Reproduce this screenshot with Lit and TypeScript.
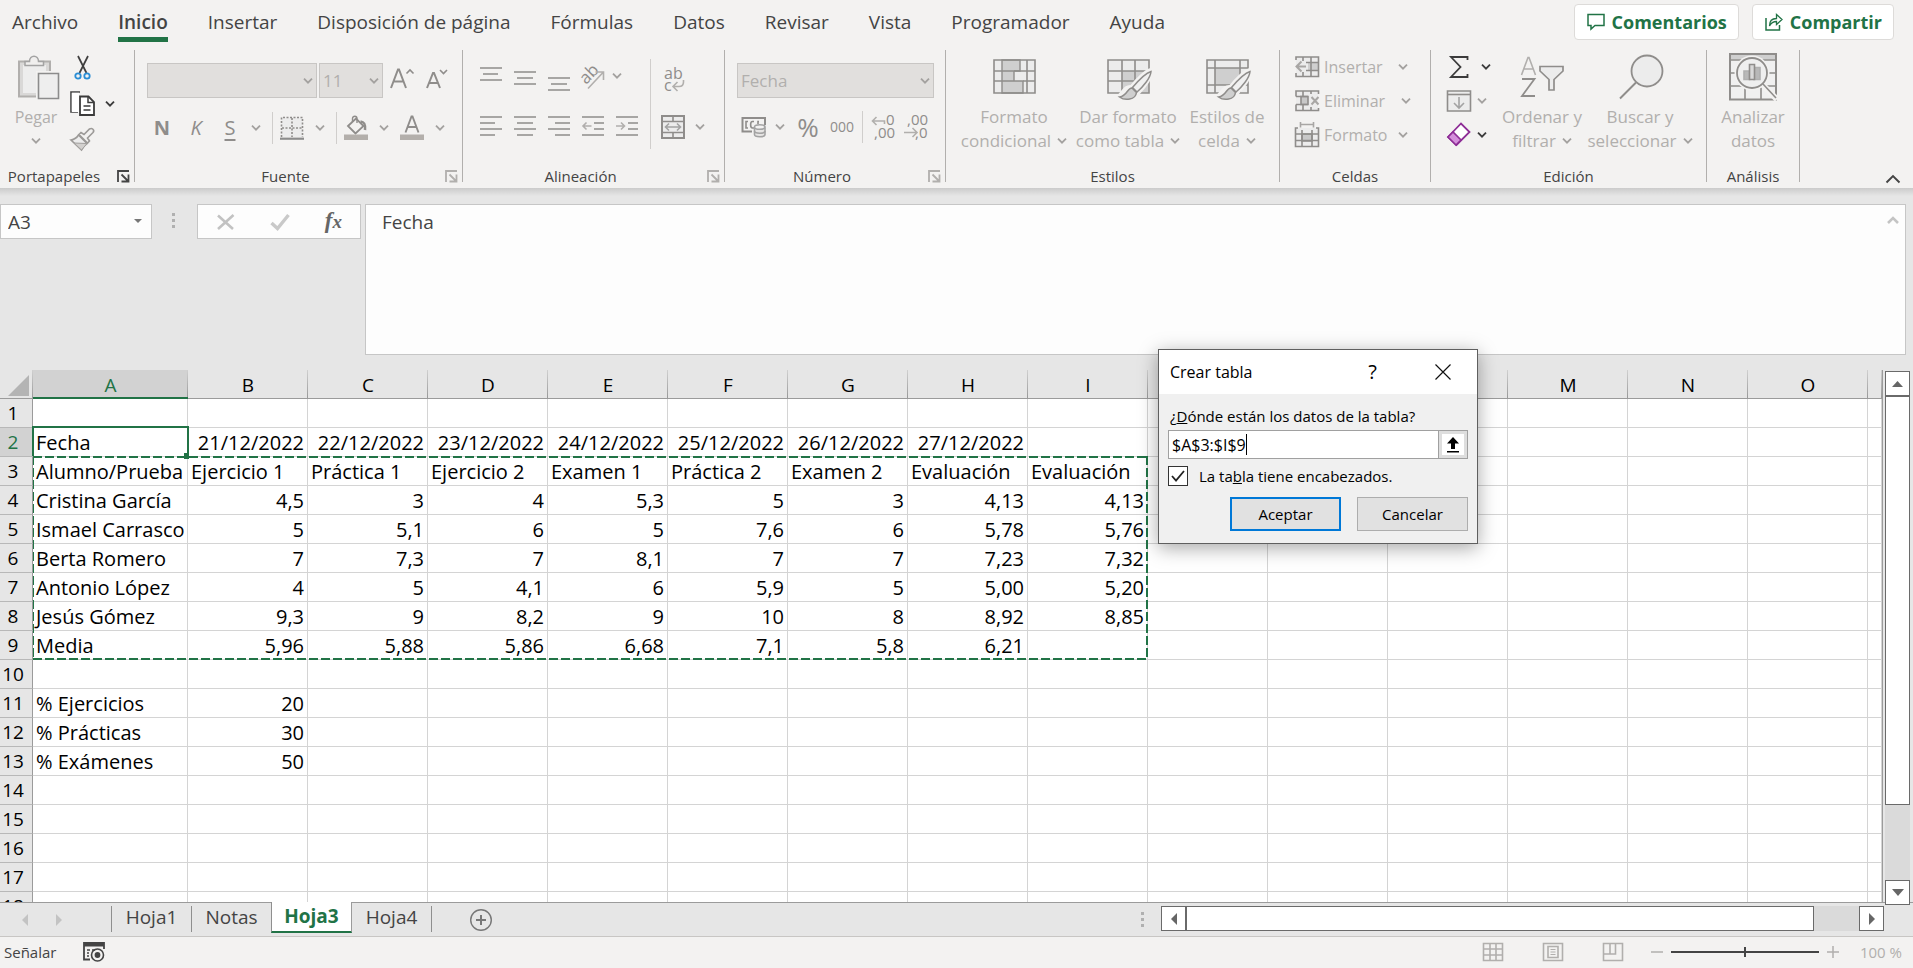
import { LitElement, html, svg, css, nothing, TemplateResult } from "lit";
import { customElement, state } from "lit/decorators.js";
import { classMap } from "lit/directives/class-map.js";

const chev = html`<svg class="chev" width="10" height="6" viewBox="0 0 10 6"><path d="M1 .7l4 4 4-4" fill="none" stroke="currentColor" stroke-width="1.8"/></svg>`;

const ico = (w: number, h: number, body: TemplateResult | TemplateResult[]) =>
  html`<svg class="ico" width=${w} height=${h} viewBox="0 0 ${w} ${h}" fill="none" stroke="currentColor" stroke-width="1.6" aria-hidden="true">${body}</svg>`;

/* Horizontal strokes given as [x1, x2, y]. */
const lines = (rows: number[][]) => svg`<path d=${rows.map(([a, b, y]) => `M${a} ${y}H${b}`).join("")} />`;

const brushOver = () =>
  svg`<path d="M47 17C42 18 33 27 27.500 34C22 33 20 38 14 44.500C24 48 33 46 34 40C40 34 47 25 47 17Z" fill="#f3f2f1" stroke="#f3f2f1" stroke-width="4"/><path d="M47 18.500C42 20 34 28 28.500 34.500L33 39C39 34 46.500 25 47 18.500Z" fill="#f0f0f0" stroke-width="1.500"/><path d="M28 35C23 35 23.500 43 15.500 44C21 48 31.500 47 32.500 39.500Z" fill="#cfcfcf" stroke-width="1.500"/>`;

const I = {
  paste: ico(48, 48, svg`<path d="M7 8.500H38V43.500H7Z" fill="#d9d8d7" stroke="#b1afad" stroke-width="2"/><path d="M11 12H34V40H11Z" fill="#ededed" stroke="none"/><path d="M13 12.500V8.500H17.500C17.500 1.500 26.500 1.500 26.500 8.500H31.500V12.500Z" fill="#f0efee" stroke="#a3a3a3" stroke-width="1.500"/><path d="M24 18H50V47H24Z" fill="#f3f2f1" stroke="none"/><path d="M26.500 20.500H46.500V45.500H26.500Z" fill="#eeeeee" stroke="#8c8c8c"/>`),
  cut: ico(18, 24, svg`<path d="M4 0L12.500 17M14 0L5.500 17" stroke="#3f3f3f" stroke-width="1.700"/><circle cx="4" cy="20" r="2.700" stroke="#2a8dd4" stroke-width="1.800"/><circle cx="13" cy="20" r="2.700" stroke="#2a8dd4" stroke-width="1.800"/>`),
  copy: ico(26, 26, svg`<path d="M8 21H1V1H10" stroke="#444"/><path d="M1.800 1.800H9V21H1.800Z" fill="#fff" stroke="none"/><path d="M10 5.500H18.500L24 11V24H10Z" fill="#fff" stroke="#3b3b3b" stroke-width="1.800"/><path d="M18 5.500V11.500H24M13.500 15H20.500M13.500 19H20.500" stroke="#3b3b3b" stroke-width="1.500"/>`),
  brush: ico(26, 24, svg`<path d="M1 12C4 11.500 7 9.500 8.500 7L17 15.500C14.500 17 13 19.500 11.500 22Z" fill="#ececec" stroke="#9c9a98"/><path d="M4 15L17 15.500L11.500 22Z" fill="#d2d0ce" stroke="#a19f9d" stroke-width="1"/><path d="M9 6.500L11 4.500L14 6.500L19.500 1C22 -.5 25 2 23 4.500L17.500 10L19.500 13L17.500 15Z" fill="#f3f2f1" stroke="#9c9a98"/>`),
  grow: ico(24, 24, svg`<path d="M1 19L8 .5H9L16 19M3.500 12.500H13.500" stroke-width="2"/><path d="M16.500 4.500L20 1L23.500 4.500" stroke-width="1.600"/>`),
  shrink: ico(24, 24, svg`<path d="M2 19L8 4H9L15 19M4 14H13" stroke-width="2"/><path d="M15 1L18.500 4.500L22 1" stroke-width="1.600"/>`),
  borders: ico(24, 24, svg`<path d="M1.500 21V1.500H22.500V21" fill="#ececec" stroke-dasharray="2 1.500"/><path d="M12 2V21M2 12H22" stroke-dasharray="2 1.500"/><path d="M0 22.700H24" stroke-width="2.200" stroke="#8c8c8c"/>`),
  fill: ico(26, 26, svg`<path d="M5 11L13 3.500L20.500 11L12.500 18.500Z" fill="#f3f2f1" stroke-width="1.800"/><path d="M9.500 7V3.500C9.500 .5 14 .5 14 3.500V8" stroke-width="1.400"/><path d="M17.500 6.500C22 7 22.500 10 22 15" stroke-width="2.600"/><path d="M1 19.500H25V25H1Z" fill="#b3afab" stroke="none"/>`),
  color: ico(26, 26, svg`<path d="M6.500 17.500L12.500 1.500H13.500L19.500 17.500M8.500 12H17.500" stroke-width="1.900"/><path d="M1 19.500H25V25H1Z" fill="#b3afab" stroke="none"/>`),
  top: ico(24, 26, lines([[1, 23, 5], [4, 19, 11], [1, 23, 17]])),
  mid: ico(24, 26, lines([[1, 23, 9], [4, 20, 15], [1, 23, 21]])),
  bot: ico(24, 26, lines([[1, 23, 15], [4, 20, 21], [1, 23, 27]])),
  left: ico(24, 24, lines([[1, 23, 2], [1, 16, 8], [1, 23, 14], [1, 16, 20]])),
  center: ico(24, 24, lines([[1, 23, 2], [4, 20, 8], [1, 23, 14], [4, 20, 20]])),
  right: ico(24, 24, lines([[1, 23, 2], [8, 23, 8], [1, 23, 14], [8, 23, 20]])),
  outdent: ico(24, 24, svg`${lines([[1, 23, 2], [13, 23, 8], [13, 23, 14], [1, 23, 20]])}<path d="M10.500 11H2M5.500 7.500L2 11L5.500 14.500" stroke="#b1afad"/>`),
  indent: ico(24, 24, svg`${lines([[1, 23, 2], [13, 23, 8], [13, 23, 14], [1, 23, 20]])}<path d="M1 11H9.500M6 7.500L9.500 11L6 14.500" stroke="#b1afad"/>`),
  orient: ico(28, 28, svg`<g transform="rotate(-45 9 11)"><text x="-1" y="18" font-size="17" fill="#8f8d8b" stroke="none">ab</text></g><path d="M9 26.500L24 10.500M16.500 10H24.500V18" stroke="#b1afad"/>`),
  wrap: ico(24, 28, svg`<text x="1" y="17" font-size="16" fill="#8f8d8b" stroke="none">ab</text><text x="1" y="29" font-size="16" fill="#8f8d8b" stroke="none">c</text><path d="M20.500 18V20C20.500 23 19 24.500 16 24.500H10.500M14.500 20L10 24.500L14.500 29" stroke="#b1afad"/>`),
  merge: ico(24, 24, svg`<path d="M1 1H23V23H1Z" fill="#ececec" stroke-width="2"/><path d="M1 6.500H23M1 17.500H23M12 1V6M12 18V23"/><path d="M5 12H19M8 8.500L4.500 12L8 15.500M16 8.500L19.500 12L16 15.500" stroke="#a3a3a3"/>`),
  money: ico(26, 22, svg`<path d="M11 15.500H1.500V2H24V9" stroke-width="2"/><path d="M7 5.500H5V12H7M13 12H11.500C9 12 9 5.500 11.500 5.500H13M18 5.500H17V8" stroke-width="1.600"/><path d="M13.500 11.500V18.500C13.500 21.500 24 21.500 24 18.500V11.500" fill="#e6e5e4" stroke="#a3a3a3"/><ellipse cx="18.750" cy="11" rx="5.250" ry="2.300" fill="#f3f2f1" stroke="#a3a3a3"/><path d="M13.500 15C13.500 18 24 18 24 15" stroke="#a3a3a3"/>`),
  moreDec: ico(24, 26, svg`<text x="15" y="11" font-size="15" fill="#8f8d8b" stroke="none">0</text><text x="3" y="24" font-size="15" fill="#8f8d8b" stroke="none">,00</text><path d="M13.500 10V7H1.500M5.500 3L1.500 7L5.500 11" stroke="#b1afad"/>`),
  lessDec: ico(24, 26, svg`<text x="3" y="11" font-size="15" fill="#8f8d8b" stroke="none">,00</text><text x="11" y="24" font-size="15" fill="#8f8d8b" stroke="none">,0</text><path d="M0 18.500H12.500M8.500 14L13 18.500L8.500 23" stroke="#b1afad"/>`),
  condfmt: ico(48, 48, svg`<path d="M4 7H45V40H4Z" fill="#ececec" stroke="none"/><path d="M12 7H30V18H12ZM12 18H24V28H12ZM12 28H33V40H12Z" fill="#cfcfcf" stroke-width="1.400"/><path d="M4 7H45V40H4Z M4 18H12M30 18H45M4 28H12M33 28H45M37 7V40M24 18H30" stroke-width="1.600"/>`),
  tablefmt: ico(48, 48, svg`<path d="M4 7H45V40H4Z" fill="#ececec" stroke="none"/><path d="M18 18H45V40H18Z" fill="#cfcfcf" stroke="none"/><path d="M4 7H45V40H4ZM4 18H45M4 28H45M18 7V40M31 7V40"/>${brushOver()}`),
  cellstyle: ico(48, 48, svg`<path d="M4 7H45V40H4Z" fill="#ececec" stroke="none"/><path d="M12 15H37V32H12Z" fill="#cfcfcf" stroke="none"/><path d="M4 7H45V40H4ZM4 15H45M4 32H45M12 7V40M37 7V40"/>${brushOver()}`),
  insert: ico(26, 24, svg`<path d="M2 2H24V21H2Z" fill="#ececec" stroke="none"/><path d="M14 7.500H24V15.500H14Z" fill="#cfcfcf" stroke="none"/><path d="M2 5V2H24.500V21.500H2V18M9 2V6M17 2V21M9 17V21M12 7.500H24M12 15.500H24"/><path d="M12 11.500H2.500M7.500 6.500L2.500 11.500L7.500 16.500" stroke="#a8a6a4" stroke-width="2"/>`),
  del: ico(26, 24, svg`<path d="M2 2H24V21H2Z" fill="#ececec" stroke="none"/><path d="M7 7.500H14V15.500H7Z" fill="#c8c8c8"/><path d="M2 7.500V2H24.500V5M2 15.500V21.500H24.500V19M9 2V7M17 2V5M9 16V21M17 18V21M2 7.500H14M2 15.500H14"/><path d="M17.500 8L24.500 15.500M24.500 8L17.500 15.500" stroke="#a8a6a4" stroke-width="2"/>`),
  format: ico(26, 26, svg`<path d="M2 6H24V24H2Z" fill="#ececec" stroke="none"/><path d="M8 12H18V19H8Z" fill="#c8c8c8"/><path d="M4 6H1.500V24.500H24.500V6H22M1.500 12H24.500M1.500 18.500H24.500M8 8V24M18 8V24"/><path d="M6.500 2.500H19.500M6.500 0V5.500M19.500 0V5.500" stroke="#a8a6a4"/>`),
  sum: ico(20, 24, svg`<path d="M18.500 5V2H2L11.500 12L2 22H18.500V19" stroke="#3b3b3b" stroke-width="1.800"/>`),
  filldown: ico(26, 24, svg`<path d="M1.500 2H24.500V22H1.500Z" fill="#ececec"/><path d="M1.500 5.500H24.500" /><path d="M13 8V18.500M8 14L13 19L18 14" stroke="#a3a3a3"/>`),
  erase: ico(26, 26, svg`<path d="M2 15L15 1.500L23.500 10L10.500 23Z" fill="#fff" stroke="#8e2d96" stroke-width="1.800"/><path d="M2 15L7 10L15 18L10 23Z" fill="#d48fdb" stroke="#8e2d96" stroke-width="1.600"/>`),
  sort: ico(48, 48, svg`<path d="M3.500 22L10 4.500H11L17.500 22M6 16H15" stroke="#b1afad"/><path d="M4 26H16.500L4 43H17" stroke-width="1.800"/><path d="M22 13.500H45V18L36 26.500V37H31V26.500L22 18Z" fill="#ececec" stroke-width="1.700"/>`),
  find: ico(48, 48, svg`<circle cx="31" cy="18" r="15.500" fill="#ececec" stroke-width="1.800"/><path d="M20 29.500L4 45.500" stroke-width="1.900"/>`),
  analyze: ico(50, 48, svg`<path d="M2 1H48V46.500H2Z" fill="#f0f0f0" stroke-width="2"/><path d="M3 2H47V6.500H3Z" fill="#cfcfcf" stroke="none"/><path d="M2 7H48M2 20H48M2 33H48M17 33V46M33 33V46"/><path d="M35 32L49 46.500" stroke="#f3f2f1" stroke-width="6"/><circle cx="24" cy="20" r="17.500" fill="#f3f2f1" stroke="none"/><circle cx="24" cy="20" r="15" fill="#efefef" stroke-width="1.800"/><path d="M35 31L48 45"/><path d="M16 18H21.500V26.500H16ZM26 14.500H32V26.500H26Z" fill="#b8b8b8" stroke="#b0b0b0"/><path d="M21.500 11.500H26.500V26.500H21.500Z" fill="#d9d9d9"/>`),
  launch: ico(13, 13, svg`<path d="M1 12V1H12" stroke-width="1.800"/><path d="M4.500 4.500L11 11M11.500 4.500V11.500H4.500" stroke-width="1.800"/>`),
  comment: ico(18, 18, svg`<path d="M1 1.500H17V12.500H8L4 16V12.500H1Z" stroke-width="1.500"/>`),
  share: ico(18, 20, svg`<path d="M1 6V18H14.500V13" stroke-width="1.500"/><path d="M4.500 14C4.500 9 7 6.500 11.500 6.500V2.500L17 7.500L11.500 12.500V9.500C8 9.500 6 11 4.500 14Z" stroke-width="1.300"/>`),
  up: ico(16, 10, svg`<path d="M1.500 8.500L8 2L14.500 8.500" stroke-width="1.900"/>`),
  cancel: ico(20, 18, svg`<path d="M2 2.500L17 16M17.500 2L2 16" stroke="#c2c2c2" stroke-width="2.600"/>`),
  accept: ico(20, 18, svg`<path d="M1.500 10L7.500 15.500L18.500 2" stroke="#c9c9c9" stroke-width="3.400"/>`),
  macro: ico(24, 22, svg`<path d="M8 18.500H2V2H22V8" stroke-width="1.800"/><path d="M2 4H22" stroke-width="3"/><path d="M5 9H8M5 12H7M5 15H7M10 9H13"/><circle cx="15.500" cy="14" r="6" stroke-width="1.600"/><circle cx="15.500" cy="14" r="2.900" fill="currentColor" stroke="none"/>`),
  vgrid: ico(22, 20, svg`<path d="M1.500 1.500H20.500V18.500H1.500ZM1.500 7H20.500M1.500 13H20.500M8 1.500V18.500M14 1.500V18.500"/>`),
  vpage: ico(22, 20, svg`<path d="M1.500 1.500H20.500V18.500H1.500ZM6 4.500H16V15.500H6Z"/><path d="M8.500 7.500H13.500M8.500 10H13.500M8.500 12.500H13.500" stroke-width="1.200"/>`),
  vbreak: ico(22, 20, svg`<path d="M1.500 1.500H20.500V18.500H1.500ZM1.500 12H13.500V1.500M8 1.500V12"/>`),
};

const TABS = ["Archivo", "Inicio", "Insertar", "Disposición de página", "Fórmulas", "Datos", "Revisar", "Vista", "Programador", "Ayuda"];
const COLS = "ABCDEFGHIJKLMNO".split("");
const DATA: Record<number, string[]> = {
  2: ["Fecha", "21/12/2022", "22/12/2022", "23/12/2022", "24/12/2022", "25/12/2022", "26/12/2022", "27/12/2022"],
  3: ["Alumno/Prueba", "Ejercicio 1", "Práctica 1", "Ejercicio 2", "Examen 1", "Práctica 2", "Examen 2", "Evaluación", "Evaluación"],
  4: ["Cristina García", "4,5", "3", "4", "5,3", "5", "3", "4,13", "4,13"],
  5: ["Ismael Carrasco", "5", "5,1", "6", "5", "7,6", "6", "5,78", "5,76"],
  6: ["Berta Romero", "7", "7,3", "7", "8,1", "7", "7", "7,23", "7,32"],
  7: ["Antonio López", "4", "5", "4,1", "6", "5,9", "5", "5,00", "5,20"],
  8: ["Jesús Gómez", "9,3", "9", "8,2", "9", "10", "8", "8,92", "8,85"],
  9: ["Media", "5,96", "5,88", "5,86", "6,68", "7,1", "5,8", "6,21"],
  11: ["% Ejercicios", "20"],
  12: ["% Prácticas", "30"],
  13: ["% Exámenes", "50"],
};

@customElement("excel-ribbon")
class ExcelRibbon extends LitElement {
  static styles = css`
    :host { display: block; background: #f3f2f1; color: #444; }
    * { box-sizing: border-box; }
    button, select { font: inherit; color: inherit; background: none; border: 0; padding: 0; margin: 0; }
    svg { display: block; flex: none; overflow: visible; }
    text { font-family: "Open Sans", sans-serif; }
    .top { display: flex; align-items: flex-start; height: 50px; padding: 0 19px 0 12px; }
    .tabs { display: flex; gap: 40px; font-size: 19px; line-height: 26px; padding-top: 10px; flex: 1; white-space: nowrap; }
    .tab { border-bottom: 5px solid transparent; height: 32px; line-height: 24px; padding-bottom: 3px; }
    .tab.on { border-color: #217346; font-weight: 600; }
    .acts { display: flex; gap: 13px; padding-top: 4px; }
    .act { display: flex; align-items: center; gap: 7px; height: 36px; padding: 0 11px 0 12px; background: #fff; border: 1px solid #dddbd9; border-radius: 4px; color: #217346; font-size: 18px; font-weight: 700; }
    .body { display: flex; height: 138px; padding-right: 12px; }
    .group { display: flex; flex-direction: column; flex: none; height: 138px; }
    .gsep { width: 1px; height: 132px; background: #b1afad; flex: none; }
    .area { display: flex; height: 116px; color: #8f8d8b; }
    .label { display: flex; align-items: center; height: 20px; font-size: 15px; line-height: 20px; }
    .label span { flex: 1; text-align: center; }
    .launch { width: 26px; padding-left: 9px; color: #b1afad; }
    .launch.live { color: #444; }
    .chev { color: #a3a19f; }
    .live .chev { color: #3b3b3b; }
    .clip { width: 134px; } .font { width: 327px; } .align { width: 261px; } .num { width: 220px; }
    .styles { width: 333px; } .cells { width: 150px; } .edit { width: 275px; } .anal { width: 92px; }
    .big { display: flex; flex-direction: column; align-items: center; font-size: 17px; line-height: 24px; color: #b1afad; padding-top: 3px; white-space: nowrap; }
    .big .ico { color: #8f8d8b; margin-bottom: 4px; }
    .big .ln { display: flex; align-items: center; gap: 6px; min-height: 24px; }
    .paste { margin-left: 13px; font-size: 16px; width: 46px; }
    .col { display: grid; grid-auto-rows: 34px; align-items: center; justify-items: start; }
    .clip .col { margin-left: 9px; grid-auto-rows: 36px; }
    .row { display: flex; align-items: center; }
    .rows { display: flex; flex-direction: column; flex: none; }
    .btn { display: flex; align-items: center; justify-content: center; height: 34px; flex: none; }
    .w14 { width: 14px; } .w18 { width: 18px; } .w24 { width: 24px; } .w26 { width: 26px; } .w30 { width: 30px; } .w34 { width: 34px; } .w38 { width: 38px; } .w40 { width: 40px; }
    .sep { width: 1px; height: 32px; background: #d0cecc; flex: none; }
    .sel { position: relative; display: block; height: 35px; }
    .sel select { appearance: none; width: 100%; height: 35px; border: 1px solid #c8c6c4; background: #e1dfdd; color: #b1afad; font-size: 17px; padding: 0 3px; opacity: 1; }
    .sel svg { position: absolute; right: 4px; top: 15px; }
    .row1 { padding: 13px 0 0 12px; }
    .row1 .sel { width: 170px; margin-right: 2px; }
    .row1 .sel.size { width: 64px; margin-right: 4px; }
    .row1 .shrink { margin-left: 5px; }
    .row2 { padding: 13px 0 0 10px; }
    .row2 .sep { margin-left: 7px; }
    .glyph { font-size: 20px; line-height: 24px; }
    .n { font-weight: 700; } .k { font-style: italic; } .s { text-decoration: underline; text-underline-offset: 4px; }
    .align .rows { padding: 9px 0 0 11px; width: 187px; gap: 17px; }
    .align .sep { height: 90px; margin-top: 9px; }
    .align .rows.side { padding-left: 7px; width: auto; align-items: flex-start; }
    .num .sel { width: 197px; margin: 13px 0 12px 12px; }
    .num .row { padding-left: 12px; }
    .num .sep { margin-left: 5px; }
    .pct { font-size: 26px; line-height: 26px; } .mil { font-size: 14px; line-height: 20px; }
    .styles .area { padding-left: 15px; gap: 8px; }
    .styles .big { width: 106px; } .styles .big.narrow { width: 76px; }
    .cells .area { padding-left: 14px; font-size: 16px; }
    .item { display: grid; grid-template-columns: 26px 70px auto; column-gap: 4px; align-items: center; justify-items: start; color: #b1afad; }
    .item .ico { color: #8f8d8b; }
    .item .wide { padding-left: 3px; }
    .edit .area { padding-left: 14px; }
    .edit .col { width: 54px; }
    .tool { display: grid; grid-template-columns: 28px auto; column-gap: 4px; align-items: center; justify-items: center; }
    .tool.sum { column-gap: 8px; }
    .edit .b1 { width: 86px; } .edit .b2 { width: 104px; margin-left: 3px; }
    .anal .big { width: 92px; }
    .collapse { margin-left: auto; align-self: flex-end; padding-bottom: 4px; }
    .shade { height: 8px; background: linear-gradient(#cbcbcb, #e6e6e6); }
  `;

  private btn(label: string, cls: string, icon: unknown) {
    return html`<button class="btn ${cls}" aria-label=${label}>${icon}</button>`;
  }

  private group(cls: string, title: string, area: unknown, launch = 0) {
    return html`<section class="group ${cls}"><div class="area">${area}</div>
      <div class="label"><span>${title}</span>${launch ? html`<button class="launch ${launch > 1 ? "live" : ""}" aria-label="Más opciones de ${title}">${I.launch}</button>` : nothing}</div></section><i class="gsep"></i>`;
  }

  private big(cls: string, icon: unknown, l1: string, l2: string, drop = true) {
    return html`<button class="big ${cls}">${icon}<span>${l1}</span><span class="ln">${l2}${drop ? chev : nothing}</span></button>`;
  }

  render() {
    return html`
      <div class="top">
        <nav class="tabs">${TABS.map((t) => html`<button class="tab ${classMap({ on: t === "Inicio" })}">${t}</button>`)}</nav>
        <div class="acts"><button class="act">${I.comment}Comentarios</button><button class="act">${I.share}Compartir</button></div>
      </div>
      <div class="body">
        ${this.group("clip", "Portapapeles", html`
          <button class="big paste">${I.paste}<span>Pegar</span><span class="ln">${chev}</span></button>
          <div class="col">
            ${this.btn("Cortar", "w30", I.cut)}
            <div class="row live">${this.btn("Copiar", "w30", I.copy)}${this.btn("Opciones de copia", "w24", chev)}</div>
            ${this.btn("Copiar formato", "w30", I.brush)}
          </div>`, 2)}
        ${this.group("font", "Fuente", html`
          <div class="rows">
            <div class="row row1">
              <label class="sel"><select aria-label="Fuente" disabled><option></option></select>${chev}</label>
              <label class="sel size"><select aria-label="Tamaño" disabled><option>11</option></select>${chev}</label>
              ${this.btn("Aumentar", "w30", I.grow)}
              ${this.btn("Reducir", "w30 shrink", I.shrink)}
            </div>
            <div class="row row2">
              ${this.btn("Negrita", "w34", html`<span class="glyph n">N</span>`)}
              ${this.btn("Cursiva", "w34", html`<span class="glyph k">K</span>`)}
              ${this.btn("Subrayado", "w34", html`<span class="glyph s">S</span>`)}
              ${this.btn("Opciones de subrayado", "w18", chev)}
              <i class="sep"></i>
              ${this.btn("Bordes", "w38", I.borders)}${this.btn("Opciones de bordes", "w18", chev)}
              <i class="sep"></i>
              ${this.btn("Relleno", "w38", I.fill)}${this.btn("Opciones de relleno", "w18", chev)}
              ${this.btn("Color de fuente", "w38", I.color)}${this.btn("Opciones de color", "w18", chev)}
            </div>
          </div>`, 1)}
        ${this.group("align", "Alineación", html`
          <div class="rows">
            <div class="row">${this.btn("Superior", "w34", I.top)}${this.btn("Medio", "w34", I.mid)}${this.btn("Inferior", "w34", I.bot)}${this.btn("Orientación", "w34", I.orient)}${this.btn("Opciones de orientación", "w14", chev)}</div>
            <div class="row">${this.btn("Izquierda", "w34", I.left)}${this.btn("Centro", "w34", I.center)}${this.btn("Derecha", "w34", I.right)}${this.btn("Disminuir sangría", "w34", I.outdent)}${this.btn("Aumentar sangría", "w34", I.indent)}</div>
          </div><i class="sep"></i>
          <div class="rows side">
            ${this.btn("Ajustar texto", "w34", I.wrap)}
            <div class="row">${this.btn("Combinar", "w30", I.merge)}${this.btn("Opciones de combinar", "w24", chev)}</div>
          </div>`, 1)}
        ${this.group("num", "Número", html`
          <div class="rows">
            <label class="sel"><select aria-label="Formato de número" disabled><option>Fecha</option></select>${chev}</label>
            <div class="row">
              ${this.btn("Moneda", "w34", I.money)}${this.btn("Opciones de moneda", "w18", chev)}
              ${this.btn("Porcentaje", "w38", html`<span class="pct">%</span>`)}${this.btn("Millares", "w30", html`<span class="mil">000</span>`)}
              <i class="sep"></i>
              ${this.btn("Aumentar decimales", "w40", I.moreDec)}${this.btn("Disminuir decimales", "w26", I.lessDec)}
            </div>
          </div>`, 1)}
        ${this.group("styles", "Estilos", html`
          ${this.big("", I.condfmt, "Formato", "condicional")}
          ${this.big("", I.tablefmt, "Dar formato", "como tabla")}
          ${this.big("narrow", I.cellstyle, "Estilos de", "celda")}`)}
        ${this.group("cells", "Celdas", html`
          <div class="col">
            <button class="item">${I.insert}<span>Insertar</span>${chev}</button>
            <button class="item">${I.del}<span>Eliminar</span><span class="wide">${chev}</span></button>
            <button class="item">${I.format}<span>Formato</span>${chev}</button>
          </div>`)}
        ${this.group("edit", "Edición", html`
          <div class="col">
            <button class="tool sum live" aria-label="Autosuma">${I.sum}${chev}</button>
            <button class="tool" aria-label="Rellenar">${I.filldown}${chev}</button>
            <button class="tool live" aria-label="Borrar">${I.erase}${chev}</button>
          </div>
          ${this.big("b1", I.sort, "Ordenar y", "filtrar")}
          ${this.big("b2", I.find, "Buscar y", "seleccionar")}`)}
        ${this.group("anal", "Análisis", this.big("", I.analyze, "Analizar", "datos", false))}
        <button class="collapse" aria-label="Contraer la cinta">${I.up}</button>
      </div>
      <div class="shade"></div>`;
  }
}

@customElement("formula-bar")
class FormulaBar extends LitElement {
  static styles = css`
    :host { display: flex; align-items: flex-start; padding: 8px 7px 15px 0; background: #e6e6e6; color: #444; font-size: 19px; }
    * { box-sizing: border-box; }
    svg { display: block; overflow: visible; }
    button { border: 0; background: none; padding: 0; font: inherit; }
    .name { position: relative; width: 152px; }
    .name input { width: 100%; height: 35px; border: 1px solid #c6c6c6; background: #fdfdfd; font: inherit; color: inherit; padding: 0 7px; }
    .name svg { position: absolute; right: 10px; top: 15px; }
    .dots { display: grid; gap: 3px; width: 45px; padding: 9px 0 0 20px; }
    .dots i { width: 3px; height: 3px; background: #b0b0b0; }
    .fx { display: flex; align-items: center; justify-content: space-between; width: 164px; height: 35px; padding: 0 18px; border: 1px solid #c6c6c6; background: #fdfdfd; margin-right: 4px; }
    .fx .fn { font: italic 700 23px/30px "Liberation Serif", serif; color: #666; }
    .fn small { font-size: 19px; }
    .text { position: relative; flex: 1; height: 151px; }
    textarea { display: block; width: 100%; height: 100%; resize: none; border: 1px solid #c6c6c6; background: #fdfdfd; font: inherit; line-height: 26px; color: inherit; padding: 4px 16px; outline: 0; }
    .text svg { position: absolute; right: 7px; top: 12px; }
  `;
  render() {
    return html`
      <label class="name"><input aria-label="Cuadro de nombres" .value=${"A3"} /><svg width="8" height="4"><path d="M0 0H8L4 4Z" fill="#777" /></svg></label>
      <div class="dots"><i></i><i></i><i></i></div>
      <div class="fx"><button aria-label="Cancelar">${I.cancel}</button><button aria-label="Introducir">${I.accept}</button><button class="fn" aria-label="Insertar función">f<small>x</small></button></div>
      <label class="text"><textarea aria-label="Barra de fórmulas" .value=${"Fecha"}></textarea><svg width="12" height="8"><path d="M1 7L6 2L11 7" fill="none" stroke="#c4c4c4" stroke-width="2.600" /></svg></label>`;
  }
}

@customElement("sheet-grid")
class SheetGrid extends LitElement {
  static styles = css`
    :host { display: flex; flex: 1; min-height: 0; background: #e6e6e6; }
    * { box-sizing: border-box; }
    .view { position: relative; flex: 1; min-width: 0; overflow: hidden; border-right: 1px solid #9b9b9b; background: #fff; }
    table { border-collapse: separate; border-spacing: 0; table-layout: fixed; width: 100%; font-size: 20px; line-height: 26px; color: #000; }
    th { font-weight: 400; padding: 0; background: #e6e6e6; }
    .h0 { width: 33px; } .cA { width: 155px; } .c { width: 120px; }
    thead th { height: 29px; padding-top: 2px; font-size: 19px; line-height: 24px; border-bottom: 1px solid #9b9b9b; background: linear-gradient(#d0d0d0, #999) right / 1px 100% no-repeat #e6e6e6; }
    thead .on { background-color: #d2d2d2; color: #217346; border-bottom: 2px solid #217346; }
    .corner svg { display: block; margin: 0 0 0 8px; }
    tbody th { height: 29px; padding-right: 6px; font-size: 19px; border-right: 1px solid #9b9b9b; border-bottom: 1px solid #b8b8b8; }
    tbody .on { background: #d2d2d2; color: #217346; }
    td { height: 29px; padding: 1px 3px 0; border-right: 1px solid #d4d4d4; border-bottom: 1px solid #d4d4d4; white-space: nowrap; }
    .r { text-align: right; }
    .rel { position: relative; }
    .pick { position: absolute; left: -1px; top: -2px; width: 157px; height: 30px; border: 2px solid #217346; border-bottom: 0; }
    .knob { position: absolute; right: -2px; bottom: -3px; width: 5px; height: 6px; background: #217346; z-index: 2; }
    .ants { position: absolute; left: 0; top: -1px; width: 1116px; height: 205px; z-index: 1; overflow: visible; }
    .vbar { display: flex; flex-direction: column; width: 25px; margin: 1px 3px -3px 2px; background: #dadada; z-index: 1; }
    .vbar button { height: 25px; border: 1px solid #6a6a6a; background: #fff; padding: 0; display: grid; place-items: center; flex: none; }
    .thumb { flex: 0 1 409px; border: 1px solid #6a6a6a; background: #fff; margin-bottom: auto; }
  `;
  render() {
    const rows = Array.from({ length: 18 }, (_, i) => i + 1);
    return html`
      <div class="view">
        <table>
          <thead><tr><th class="h0 corner"><svg width="21" height="21"><path d="M21 0V21H0Z" fill="#b4b4b4" /></svg></th>
            ${COLS.map((c) => html`<th class=${c === "A" ? "cA on" : "c"}>${c}</th>`)}<th></th></tr></thead>
          <tbody>${rows.map((r) => html`<tr><th class=${r === 2 ? "on" : ""}>${r}</th>${[...COLS, "P"].map((_, i) => this.cell(r, i))}</tr>`)}</tbody>
        </table>
      </div>
      <div class="vbar">
        <button aria-label="Subir"><svg width="11" height="6"><path d="M5.500 0L11 6H0Z" fill="#666" /></svg></button>
        <div class="thumb"></div>
        <button aria-label="Bajar"><svg width="12" height="7"><path d="M0 0H12L6 7Z" fill="#666" /></svg></button>
      </div>`;
  }
  private cell(r: number, i: number) {
    const v = DATA[r]?.[i] ?? "";
    const right = i > 0 && r !== 3;
    const over =
      i === 0 && r === 2 ? html`<i class="pick"></i><i class="knob"></i>`
      : i === 0 && r === 3 ? html`<svg class="ants"><path d="M0 1H1114M0 203H1114" stroke="#217346" stroke-width="2" stroke-dasharray="9 3" /><path d="M1114 0V204" stroke="#217346" stroke-width="2" stroke-dasharray="9 3" /><path d="M.5 0V204" stroke="#217346" stroke-dasharray="9 3" /></svg>`
      : nothing;
    return html`<td class=${classMap({ r: right, rel: over !== nothing })}>${v}${over}</td>`;
  }
}

@customElement("sheet-footer")
class SheetFooter extends LitElement {
  static styles = css`
    :host { display: block; color: #444; }
    * { box-sizing: border-box; }
    svg { display: block; overflow: visible; }
    button { border: 0; background: none; padding: 0; margin: 0; font: inherit; color: inherit; }
    .bar { display: flex; height: 34px; background: #e6e6e6; border-top: 1px solid #9b9b9b; font-size: 19px; padding-right: 29px; }
    .nav { display: flex; gap: 28px; width: 111px; padding-left: 22px; align-items: center; }
    .tab { height: 26px; width: 80px; margin-top: 3px; border-left: 1px solid #8f8f8f; padding-bottom: 4px; line-height: 20px; }
    .tab.on { height: 31px; width: 81px; margin-top: -1px; background: #fff; border-bottom: 2px solid #217346; border-right: 1px solid #9b9b9b; color: #217346; font-weight: 700; padding: 0 0 1px; }
    .tab.on + .tab { border-left: 0; border-right: 1px solid #8f8f8f; }
    .add { margin-left: 38px; }
    .dots { display: grid; gap: 3px; align-content: center; margin-left: auto; width: 20px; }
    .dots i { width: 3px; height: 3px; background: #b0b0b0; }
    .hbar { display: flex; width: 723px; height: 25px; margin-top: 3px; background: #dadada; }
    .hbar button { width: 25px; border: 1px solid #6a6a6a; background: #fff; display: grid; place-items: center; flex: none; }
    .thumb { width: 628px; border: 1px solid #6a6a6a; background: #fff; margin-right: auto; }
    .status { display: flex; align-items: center; height: 32px; background: #f3f2f1; border-top: 1px solid #c8c6c4; font-size: 15px; padding: 0 11px 2px 4px; }
    .macro { margin-left: 26px; }
    .views { display: flex; gap: 38px; margin-left: auto; margin-right: 27px; color: #b1afad; }
    .zoom { display: flex; align-items: center; gap: 8px; color: #b1afad; }
    .zoom output { width: 55px; text-align: right; }
    input { appearance: none; width: 148px; height: 12px; margin: 0; background: linear-gradient(#444, #444) center / 100% 2px no-repeat; }
    input::-webkit-slider-thumb { appearance: none; width: 2px; height: 10px; background: #444; border: 0; }
  `;
  render() {
    return html`
      <div class="bar">
        <div class="nav"><button aria-label="Hoja anterior"><svg width="6" height="12"><path d="M6 0V12L0 6Z" fill="#c3c3c3" /></svg></button><button aria-label="Hoja siguiente"><svg width="6" height="12"><path d="M0 0V12L6 6Z" fill="#c3c3c3" /></svg></button></div>
        ${["Hoja1", "Notas", "Hoja3", "Hoja4"].map((t) => html`<button class="tab ${classMap({ on: t === "Hoja3" })}">${t}</button>`)}
        <button class="add" aria-label="Hoja nueva"><svg width="22" height="22" fill="none" stroke="#777"><circle cx="11" cy="11" r="10.300" stroke-width="1.400" /><path d="M6 11H16M11 6V16" stroke-width="2" /></svg></button>
        <div class="dots"><i></i><i></i><i></i></div>
        <div class="hbar"><button aria-label="Izquierda"><svg width="6" height="12"><path d="M6 0V12L0 6Z" fill="#666" /></svg></button><div class="thumb"></div><button aria-label="Derecha"><svg width="6" height="12"><path d="M0 0V12L6 6Z" fill="#666" /></svg></button></div>
      </div>
      <div class="status">
        <span>Señalar</span><button class="macro" aria-label="Grabar macro">${I.macro}</button>
        <div class="views"><button aria-label="Normal">${I.vgrid}</button><button aria-label="Diseño de página">${I.vpage}</button><button aria-label="Vista previa de salto">${I.vbreak}</button></div>
        <div class="zoom"><button aria-label="Alejar"><svg width="12" height="12"><path d="M0 6H12" stroke="#b1afad" stroke-width="1.500" /></svg></button><input type="range" min="0" max="100" value="50" aria-label="Zoom" /><button aria-label="Acercar"><svg width="12" height="12"><path d="M0 6H12M6 0V12" stroke="#b1afad" stroke-width="1.500" /></svg></button><output>100 %</output></div>
      </div>`;
  }
}

@customElement("table-dialog")
class TableDialog extends LitElement {
  @state() private headers = true;
  static styles = css`
    :host { box-sizing: border-box; position: absolute; left: 1158px; top: 349px; width: 320px; background: #f0f0f0; border: 1px solid #5f5f5f; box-shadow: 0 4px 18px rgba(0, 0, 0, 0.35); color: #000; font-size: 15px; line-height: 20px; z-index: 5; }
    * { box-sizing: border-box; }
    button { font: inherit; color: inherit; padding: 0; margin: 0; border: 0; background: none; }
    svg { display: block; }
    .title { display: flex; align-items: center; height: 44px; background: #fff; padding: 0 26px 0 11px; font-size: 16px; }
    .title span { flex: 1; }
    .title .help { font-size: 20px; margin-right: 58px; }
    .body { padding: 12px 9px 12px; }
    .q { display: block; padding-left: 2px; }
    .ref { display: flex; align-items: center; height: 29px; margin: 4px 0 7px; border: 1px solid #a0a0a0; background: #fff; }
    .ref input { field-sizing: content; border: 0; outline: 0; background: none; font: inherit; font-size: 16px; padding: 1px 0 0 3px; }
    .caret { width: 1px; height: 21px; background: #000; }
    .pickup { width: 28px; height: 27px; margin-left: auto; background: #fff; border: 3px solid #dedede; outline: 1px solid #a0a0a0; display: grid; place-items: center; }
    .check { display: grid; grid-template-columns: 20px auto; gap: 11px; align-items: center; }
    .check input { appearance: none; width: 20px; height: 20px; margin: 0; border: 1px solid #333; background: #fff; grid-area: 1 / 1; }
    .check svg { grid-area: 1 / 1; pointer-events: none; z-index: 1; margin: 0 auto; }
    .foot { display: flex; justify-content: flex-end; gap: 16px; margin-top: 11px; }
    .foot button { width: 111px; height: 34px; background: #e1e1e1; border: 1px solid #adadad; }
    .foot .ok { border: 2px solid #0078d7; }
  `;
  render() {
    return html`
      <div class="title"><span>Crear tabla</span><button class="help" aria-label="Ayuda">?</button><button aria-label="Cerrar"><svg width="16" height="16"><path d="M.5.5L15.500 15.500M15.500.5L.5 15.500" stroke="#111" stroke-width="1.200" /></svg></button></div>
      <div class="body">
        <label class="q" for="range">¿<u>D</u>ónde están los datos de la tabla?</label>
        <div class="ref"><input id="range" .value=${"$A$3:$I$9"} /><i class="caret"></i><button class="pickup" aria-label="Contraer cuadro"><svg width="12" height="16"><path d="M6 0L12 6.500H8V12H4V6.500H0ZM0 14H12V15.500H0Z" /></svg></button></div>
        <label class="check"><input type="checkbox" .checked=${this.headers} @change=${(e: Event) => (this.headers = (e.target as HTMLInputElement).checked)} />${this.headers ? html`<svg width="14" height="12"><path d="M1 6L5 10.500L13 1" fill="none" stroke="#222" stroke-width="1.800" /></svg>` : nothing}<span>La ta<u>b</u>la tiene encabezados.</span></label>
        <div class="foot"><button class="ok">Aceptar</button><button>Cancelar</button></div>
      </div>`;
  }
}

@customElement("app-root")
class AppRoot extends LitElement {
  static styles = css`
    :host { display: flex; flex-direction: column; position: relative; height: 100vh; overflow: hidden; background: #e6e6e6; font-family: "Open Sans", "Noto Sans", sans-serif; }
  `;
  render() {
    return html`<excel-ribbon></excel-ribbon><formula-bar></formula-bar><sheet-grid></sheet-grid><sheet-footer></sheet-footer><table-dialog></table-dialog>`;
  }
}
